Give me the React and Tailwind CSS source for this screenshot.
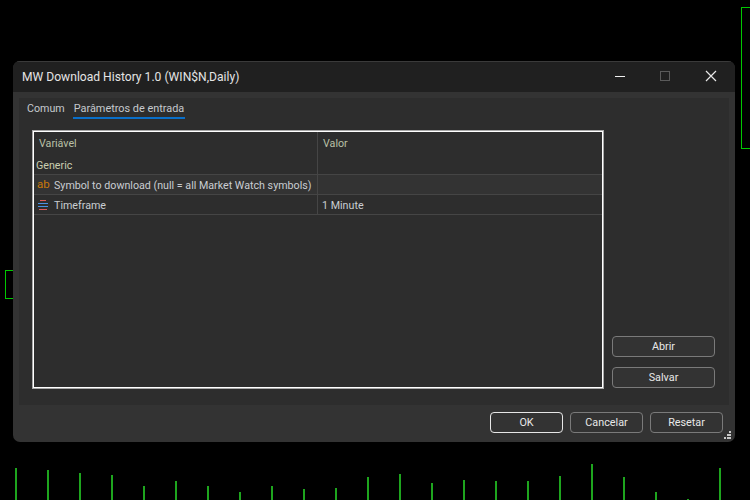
import React from 'react';

const bars = [
  [16, 468], [48, 470], [80, 473], [112, 475], [144, 486], [176, 481], [208, 486], [240, 492],
  [272, 486], [304, 489], [336, 488], [368, 477], [400, 474], [432, 483], [464, 480], [496, 481],
  [528, 481], [560, 476], [592, 464], [624, 477], [656, 492], [688, 499], [720, 468],
];

function Chart() {
  return (
    <svg className="absolute inset-0" width="750" height="500" shapeRendering="crispEdges">
      {bars.map(([x, y]) => (
        <rect key={x} x={x - 1} y={y} width="2" height={500 - y} fill="#1ea51e" />
      ))}
      <path d="M13 270.5H5.5V298.5H13" fill="none" stroke="#00c800" />
      <path d="M750 7.5H741.5V148.5H750" fill="none" stroke="#00c800" />
    </svg>
  );
}

function SmallButton({ children, primary, className }) {
  return (
    <button
      className={`h-[21px] rounded-[4px] border bg-[#333333] pt-[2px] text-[#e8e8e8] text-[10.8px] leading-none ${primary ? 'border-[#e6e6e6]' : 'border-[#7a7a7a]'} ${className}`}
    >
      {children}
    </button>
  );
}

function Row({ icon, name, value, alt }) {
  return (
    <div className={`flex h-5 border-b border-[#454545] text-[10.7px] text-[#c9cdd2] ${alt ? 'bg-[#333333]' : ''}`}>
      <div className="flex w-[284px] items-center border-r border-[#454545] pl-[3px]">
        <span className="flex w-[17px] shrink-0 justify-start">{icon}</span>
        <span className="whitespace-nowrap pt-[3px]">{name}</span>
      </div>
      <div className="pl-1 leading-[22px]">{value}</div>
    </div>
  );
}

export default function App() {
  return (
    <div className="relative h-[500px] w-[750px] overflow-hidden bg-black pl-[13px] pt-[61px] font-['Roboto',sans-serif]">
      <Chart />
      <div className="relative flex h-[381px] w-[722px] flex-col overflow-hidden rounded-[7px] bg-[#333333]">
        {/* title bar */}
        <div className="flex h-[31px] shrink-0 items-center justify-between border-t border-[#3a3a3a] bg-[#202020] pl-[9px]">
          <span className="text-[12.1px] text-[#e4e4e4]">MW Download History 1.0 (WIN$N,Daily)</span>
          <svg width="150" height="16" viewBox="0 0 150 16" shapeRendering="crispEdges">
            <rect x="30" y="7" width="10" height="1" fill="#f0f0f0" />
            <rect x="75.5" y="2.5" width="9" height="9" rx="1" fill="none" stroke="#5a5a5a" />
            <path d="M121 2L131 12M131 2L121 12" stroke="#e8e8e8" strokeWidth="1.2" shapeRendering="auto" />
          </svg>
        </div>

        {/* inner panel */}
        <div className="mx-[6px] mt-[6px] h-[307px] shrink-0 bg-[#2d2d2d]">
          <div className="flex h-[32px] gap-[8px] pl-[8px] pt-[3px] text-[10.7px] text-[#c5c9ce]">
            <span>Comum</span>
            <span className="h-[18px] border-b-2 border-[#0a6fc9] px-[1px] text-[10.9px]">Parâmetros de entrada</span>
          </div>

          <div className="flex h-[259px] pl-[13px]">
            {/* inputs table */}
            <div className="h-[259px] w-[572px] border border-[#a8a8a8]">
              <div className="h-full border border-white">
                <div className="flex h-[43px] border-b border-[#454545] text-[10.7px] text-[#b9c0a6]">
                  <div className="w-[284px] border-r border-[#454545]">
                    <div className="pl-[5px] pt-[4px]">Variável</div>
                    <div className="pl-[2px] pt-[6px] text-[#c9cdb0]">Generic</div>
                  </div>
                  <div className="pl-[5px] pt-[4px]">Valor</div>
                </div>
                <Row
                  alt
                  name="Symbol to download (null = all Market Watch symbols)"
                  value=""
                  icon={<span className="text-[11.5px] leading-none text-[#c8780a]">ab</span>}
                />
                <Row
                  name="Timeframe"
                  value="1 Minute"
                  icon={
                    <svg className="mt-[2px]" width="12" height="12" viewBox="0 0 12 12" shapeRendering="crispEdges">
                      <rect x="3" y="0" width="6" height="1" fill="#e05a5a" />
                      <rect x="1" y="3" width="10" height="1" fill="#4a90e2" />
                      <rect x="1" y="6" width="10" height="1" fill="#4a90e2" />
                      <rect x="2" y="9" width="8" height="1" fill="#e05a5a" />
                    </svg>
                  }
                />
              </div>
            </div>

            {/* side buttons */}
            <div className="ml-[8px] flex flex-col justify-end gap-[10px] pb-[1px]">
              <SmallButton className="w-[103px]">Abrir</SmallButton>
              <SmallButton className="w-[103px]">Salvar</SmallButton>
            </div>
          </div>
        </div>

        {/* footer */}
        <div className="flex justify-end gap-[7px] pr-[12px] pt-[7px]">
          <SmallButton primary className="w-[73px]">OK</SmallButton>
          <SmallButton className="w-[73px]">Cancelar</SmallButton>
          <SmallButton className="w-[73px]">Resetar</SmallButton>
        </div>

        {/* resize grip */}
        <svg className="absolute bottom-[3px] right-[3px]" width="8" height="8" viewBox="0 0 8 8" shapeRendering="crispEdges" fill="#c8c8c8">
          <rect x="5" y="0" width="2" height="2" />
          <rect x="2.5" y="3" width="2" height="2" />
          <rect x="5" y="3" width="2" height="2" />
          <rect x="0" y="5.5" width="2" height="2" />
          <rect x="2.5" y="5.5" width="2" height="2" />
          <rect x="5" y="5.5" width="2" height="2" />
        </svg>
      </div>
    </div>
  );
}
